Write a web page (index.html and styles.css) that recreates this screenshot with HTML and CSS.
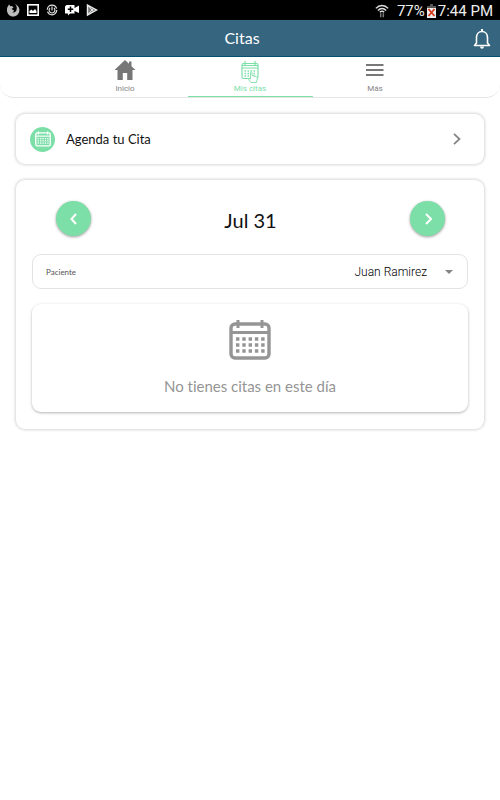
FILE: index.html
```html
<!DOCTYPE html>
<html lang="es">
<head>
<meta charset="utf-8">
<meta name="viewport" content="width=device-width, initial-scale=1">
<title>Citas</title>
<link rel="stylesheet" href="styles.css">
</head>
<body>
<svg class="defs" width="0" height="0" aria-hidden="true">
  <symbol id="calendar" viewBox="0 0 42 42">
    <rect x="2" y="5" width="38" height="34" rx="4" fill="none" stroke="currentColor" stroke-width="3.4"/>
    <path d="M2 13.500H40" stroke="currentColor" stroke-width="3"/>
    <path d="M9 1V9M33 1V9" stroke="currentColor" stroke-width="3"/>
    <path d="M7 20H36M7 26H36M7 32H36" stroke="currentColor" stroke-width="3.400" stroke-dasharray="3.400 2.900"/>
  </symbol>
</svg>
<div class="status">
  <div class="status-group">
    <svg width="14" height="14" viewBox="0 0 14 14"><path d="M3 1.500 1.500 4C-.5 9 3 13.500 7 13.500S14 10 13.300 6C13 4 11.500 2 9 1c1.500 1.500 2 3 1.700 5C10.500 9 8 10 6 9c1.500 0 2-.6 2-1.500L5.500 6l2-1.500L6 3 4.500 3.300z" fill="#bdbdbd"/></svg>
    <svg width="12" height="14" viewBox="0 0 12 14"><rect x=".8" y="1.800" width="10.400" height="10.400" fill="none" stroke="#fff" stroke-width="1.600"/><path d="M2.500 10V8l2-1.500L6 8l2-2 1.500 2v2z" fill="#fff"/></svg>
    <svg width="12" height="14" viewBox="0 0 12 14"><g fill="none" stroke="#e4e4e4" stroke-width="1.200"><circle cx="6" cy="7" r="4.800" stroke-dasharray="13 2"/><path d="M4 5a2.900 2.900 0 1 0 4 0M6 3.500V7.500"/></g></svg>
    <svg width="14" height="14" viewBox="0 0 14 14"><path d="M1.500 2H9.500V5L14 2.500V10L9.500 8V10.500H5L3 12.500V10.500H0V3.500z" fill="#fff"/><path d="M5.500 3.500V9M2.800 6.200H8.200" stroke="#000" stroke-width="1.500"/></svg>
    <svg width="12" height="14" viewBox="0 0 12 14"><path d="M1.500 2 10.500 7 1.500 12z" fill="#777" stroke="#eee" stroke-width="1.400"/><path d="m1.500 2 6 6.500M1.500 12l6-6.500" stroke="#eee"/></svg>
  </div>
  <div class="status-group status-right">
    <svg width="14" height="16" viewBox="0 0 16 16"><g fill="none" stroke="#ddd" stroke-width="1.700"><path d="M1 5C5 .5 11 .5 15 5M3.300 7.500c3-3.200 6.400-3.200 9.400 0M5.500 9.500c1.700-1.600 3.300-1.600 5 0"/><path d="M6.500 10.500V15M9.500 10.500V15" stroke="#777"/></g></svg>
    <span class="percent">77%</span>
    <svg width="9" height="15" viewBox="0 0 9 15"><path d="M3 0h3v2h3v12H0V2h3z" fill="#eee"/><path d="M3 0h3v2h3v2H0V2h3z" fill="#555"/><path d="m1.500 5 6 7M7.500 5l-6 7" stroke="#d43b1e" stroke-width="1.800"/></svg>
    <span>7:44 PM</span>
  </div>
</div>
<header class="bar">
  <h1>Citas</h1>
  <button class="bell" aria-label="Notificaciones">
    <svg width="18" height="20" viewBox="0 0 18 20"><path d="M1.500 16.500H16.500L14.500 14V8.500C14.500 5 12.200 2.500 9 2.500S3.500 5 3.500 8.500V14z" fill="none" stroke="#fff" stroke-width="1.600" stroke-linejoin="round"/><path d="M9 0V3" stroke="#fff" stroke-width="2"/><path d="M7 17.500H11Q10.800 19.700 9 19.700T7 17.500" fill="#fff"/></svg>
  </button>
</header>
<nav class="tabs">
  <a class="tab" href="#inicio">
    <svg width="22" height="26" viewBox="0 0 22 26"><path d="M11 3 .5 13H3.500V23H8.800V16H13.200V23H18.500V13H21.500L17.500 9.200V4.500H15V6.800z" fill="#777"/></svg>
    <span>Inicio</span>
  </a>
  <a class="tab active" href="#citas" aria-current="page">
    <svg width="18" height="26" viewBox="0 0 18 26"><g fill="none" stroke="currentColor" stroke-width="1.200"><rect x="1" y="6.500" width="16" height="15" rx="1.500"/><path d="M1 11H17M1 8.500H17M4 4V8M14 4V8"/><path d="M3.500 14H15M3.500 16.500H15M3.500 19H15" stroke-width="1.300" stroke-dasharray="1.500 1.500"/></g><path d="M9.500 20V15.500Q10.300 14 11 15.500V18.500L15.500 19.500Q16.500 20 16.200 22L15.500 25.500H10L7.500 22.500Q7.500 21 9.500 22z" fill="#fff" stroke="currentColor" stroke-width=".9"/></svg>
    <span>Mis citas</span>
  </a>
  <a class="tab" href="#mas">
    <svg width="18" height="26" viewBox="0 0 18 26"><path d="M0 8H17.500M0 13H17.500M0 18H17.500" stroke="#777" stroke-width="2"/></svg>
    <span>Más</span>
  </a>
</nav>
<main>
  <a class="card schedule" href="#agenda">
    <span class="badge"><svg width="16" height="16"><use href="#calendar"/></svg></span>
    <span class="schedule-text">Agenda tu Cita</span>
    <svg width="8" height="12" viewBox="0 0 8 12"><path d="M1 .8 6.500 6 1 11.200" fill="none" stroke="#858585" stroke-width="1.800"/></svg>
  </a>
  <section class="card day">
    <div class="day-nav">
      <button class="round" aria-label="Día anterior"><svg width="8" height="12" viewBox="0 0 8 12"><path d="M6 1 1.500 6 6 11" fill="none" stroke="#fff" stroke-width="2"/></svg></button>
      <h2>Jul 31</h2>
      <button class="round" aria-label="Día siguiente"><svg width="8" height="12" viewBox="0 0 8 12"><path d="M2 1 7 6 2 11" fill="none" stroke="#fff" stroke-width="2"/></svg></button>
    </div>
    <div class="patient">
      <label for="patient">Paciente</label>
      <select id="patient"><option>Juan Ramirez</option></select>
      <svg class="caret" width="8" height="4" viewBox="0 0 8 4"><path d="M0 0H8L4 4z" fill="#858585"/></svg>
    </div>
    <div class="empty">
      <svg width="42" height="42"><use href="#calendar"/></svg>
      <p>No tienes citas en este día</p>
    </div>
  </section>
</main>
</body>
</html>
```
FILE: styles.css
```css
* {
  box-sizing: border-box;
}

body {
  margin: 0;
  background: #fff;
  color: #111;
  font-family: Lato, sans-serif;
  font-variant-ligatures: none;
}

svg {
  display: block;
  flex: none;
}

.defs {
  position: absolute;
}

a {
  color: inherit;
  text-decoration: none;
}

button {
  padding: 0;
  border: 0;
  background: none;
  cursor: pointer;
}

h1, h2, p {
  margin: 0;
  font-weight: 400;
}

.status {
  display: flex;
  justify-content: space-between;
  align-items: center;
  height: 20px;
  padding: 0 7px 0 6px;
  background: #000;
  color: #eee;
  font: 15px/20px Roboto, sans-serif;
}

.status-group {
  display: flex;
  align-items: center;
  gap: 7px;
}

.status-right {
  gap: 2px;
  padding-top: 2px;
}

.percent {
  margin-left: 6px;
}

.bar {
  display: grid;
  grid-template-columns: 1fr auto 1fr;
  align-items: center;
  height: 37px;
  padding: 0 9px 0 0;
  border-bottom: 1px solid #04506f;
  background: #36657f;
  color: #fff;
}

.bar h1 {
  grid-column: 2;
  padding-right: 7px;
  font-size: 16px;
  line-height: 20px;
}

.bell {
  justify-self: end;
  padding-top: 2px;
}

.tabs {
  display: grid;
  grid-template-columns: repeat(3, 25%);
  justify-content: center;
  height: 41px;
  border-bottom: 1px solid #e6e6e6;
  border-radius: 0 0 14px 14px;
}

.tab {
  display: flex;
  flex-direction: column;
  align-items: center;
  border-bottom: 1px solid transparent;
  color: #858585;
  font: 8px/10px Roboto, sans-serif;
}

.tab span {
  padding-top: 1px;
}

.tab.active {
  border-color: #7ddfa8;
  color: #7ddfa8;
}

main {
  display: grid;
  gap: 16px;
  padding: 16px;
}

.card {
  border-radius: 9px;
  background: #fff;
  box-shadow: 0 0 3px 1px rgba(0, 0, 0, 0.16);
}

.schedule {
  display: flex;
  align-items: center;
  gap: 11px;
  height: 50px;
  padding: 0 23px 0 14px;
  font-size: 13px;
}

.schedule-text {
  flex: 1;
}

.badge {
  display: grid;
  place-items: center;
  width: 25px;
  height: 25px;
  border-radius: 50%;
  background: #7ddfa8;
  color: #fff;
}

.day {
  padding: 21px 16px 17px;
}

.day-nav {
  display: flex;
  justify-content: space-between;
  align-items: center;
  padding: 0 23px 0 24px;
}

.day-nav h2 {
  font-size: 20px;
  line-height: 24px;
  padding-top: 3px;
}

.round {
  display: grid;
  place-items: center;
  width: 35px;
  height: 35px;
  border-radius: 50%;
  background: #7ddfa8;
  box-shadow: 0 1px 3px rgba(0, 0, 0, 0.4);
}

.patient {
  display: flex;
  align-items: center;
  height: 35px;
  margin-top: 18px;
  border: 1px solid #e3e3e3;
  border-radius: 9px;
  position: relative;
}

.patient label {
  padding-left: 13px;
  color: #555;
  font-size: 8px;
}

.patient select {
  flex: 1;
  height: 100%;
  padding: 0 40px 0 0;
  border: 0;
  background: none;
  appearance: none;
  color: #000;
  font: 300 12px Roboto, sans-serif;
  text-align-last: right;
}

.caret {
  position: absolute;
  right: 14px;
  pointer-events: none;
}

.empty {
  display: grid;
  justify-items: center;
  gap: 15px;
  margin-top: 15px;
  padding: 15px 0 16px;
  border-radius: 9px;
  box-shadow: 0 1px 3px rgba(0, 0, 0, 0.3);
  color: #959595;
  font-size: 15px;
  line-height: 20px;
}
```
